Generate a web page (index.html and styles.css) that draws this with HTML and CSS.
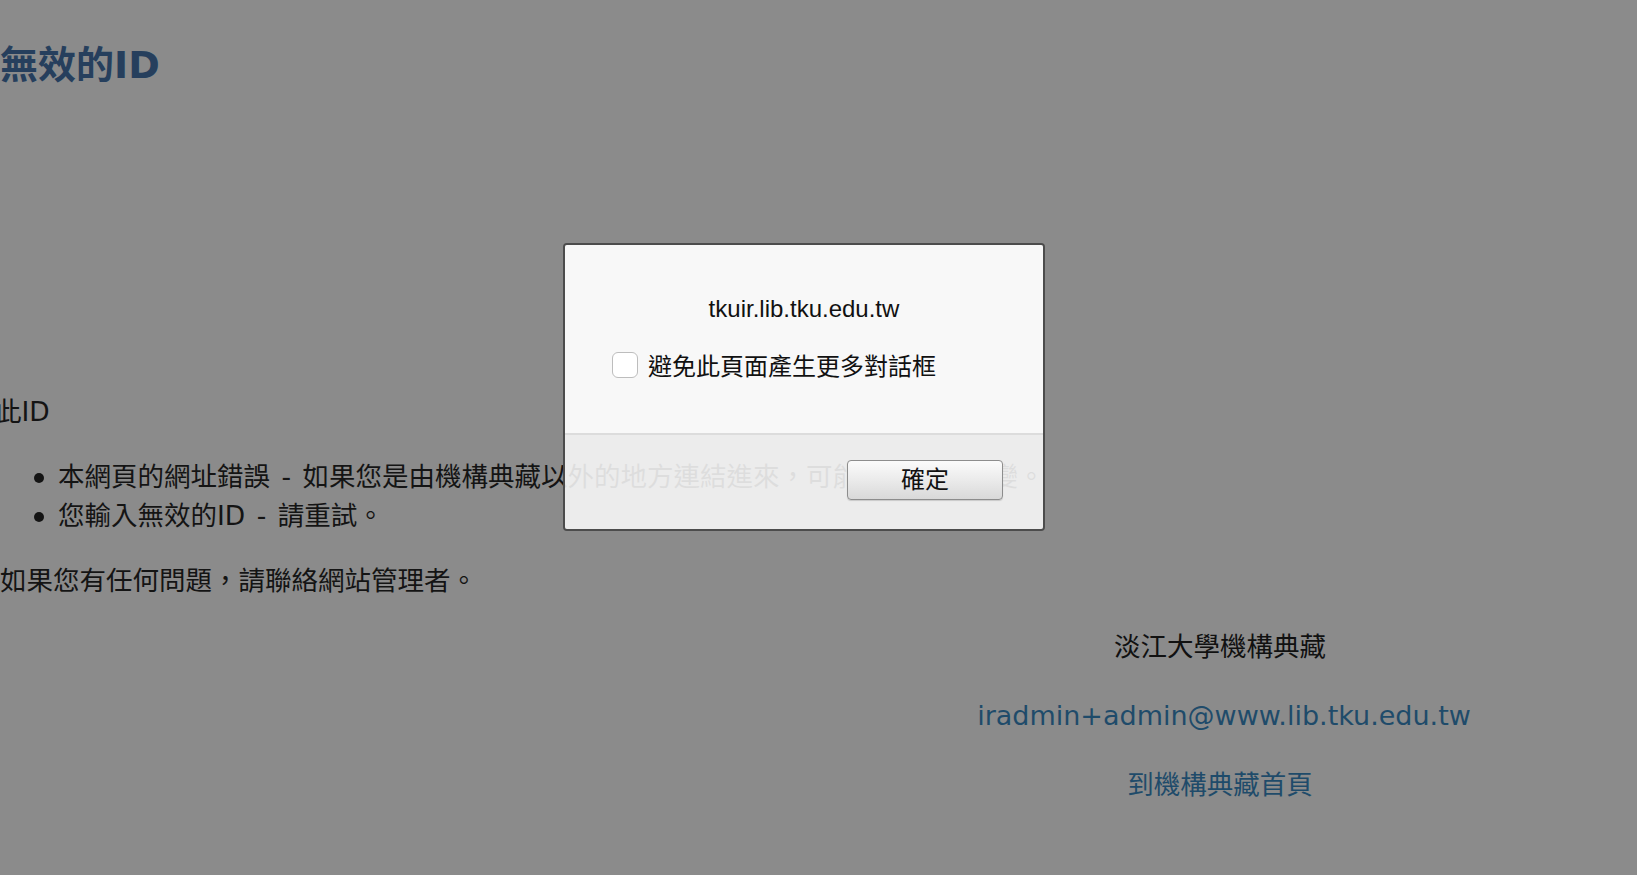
FILE: index.html
```html
<!DOCTYPE html>
<html lang="zh-Hant">
<head>
<meta charset="utf-8">
<title>無效的ID</title>
<link rel="stylesheet" href="styles.css">
</head>
<body>
<div class="page">
  <h1 class="title">無效的ID</h1>
  <p class="lead">此ID</p>
  <ul class="reasons">
    <li>本網頁的網址錯誤 - 如果您是由機構典藏以外的地方連結進來，可能是網址已改變。</li>
    <li>您輸入無效的ID - 請重試。</li>
  </ul>
  <p class="text">如果您有任何問題，請聯絡網站管理者。</p>
  <div class="footer">
    <p class="site">淡江大學機構典藏</p>
    <p><a class="link mail" href="#">iradmin+admin@www.lib.tku.edu.tw</a></p>
    <p><a class="link" href="#">到機構典藏首頁</a></p>
  </div>
</div>

<div class="dialog">
  <div class="dialog-body">
    <div class="dialog-host">tkuir.lib.tku.edu.tw</div>
    <label class="dialog-check">
      <span class="box"></span>
      <span>避免此頁面產生更多對話框</span>
    </label>
  </div>
  <div class="dialog-foot">
    <button class="ok" type="button">確定</button>
  </div>
</div>
</body>
</html>
```

FILE: styles.css
```css
html, body {
  margin: 0;
  padding: 0;
}

body {
  background: #8b8b8b;
  color: #141414;
  font-family: "DejaVu Sans", "Noto Sans CJK TC", sans-serif;
  font-size: 26.5px;
  line-height: 39px;
  width: 1637px;
  height: 875px;
  overflow: hidden;
  position: relative;
}

.title {
  margin: 44px 0 304.5px;
  font-size: 38px;
  line-height: 43px;
  font-weight: bold;
  color: #263f5d;
}

.lead {
  margin: 0 0 0 -5px;
}

.reasons {
  margin: 26px 0;
  padding-left: 58px;
  list-style: none;
  word-spacing: 3px;
  white-space: nowrap;
}

.reasons li::before {
  content: "";
  display: inline-block;
  width: 10px;
  height: 10px;
  border-radius: 50%;
  background: #141414;
  margin-left: -24px;
  margin-right: 14px;
  vertical-align: 3px;
}

.text {
  margin: 26px 0;
}

.footer {
  width: 834px;
  margin: 27px 0 0 auto;
  text-align: center;
}

.footer p {
  margin: 0 0 30px;
}

.site {
  color: #111;
}

.link {
  color: #1f4b6a;
  text-decoration: none;
}

.mail {
  font-size: 27px;
  margin-left: 8px;
}

/* alert dialog */
.dialog {
  position: absolute;
  left: 563px;
  top: 243px;
  width: 482px;
  height: 288px;
  box-sizing: border-box;
  border: 2px solid #4c4c4c;
  border-radius: 4px;
  overflow: hidden;
  display: flex;
  flex-direction: column;
  font-family: "Liberation Sans", "Noto Sans CJK TC", sans-serif;
  color: #111;
}

.dialog-body {
  background: #f8f8f8;
  height: 190px;
  box-sizing: border-box;
  padding: 46px 0 0 47px;
  border-bottom: 2px solid #dcdcdc;
}

.dialog-host {
  font-size: 24px;
  line-height: 36px;
  text-align: center;
  margin-left: -47px;
}

.dialog-check {
  display: flex;
  align-items: center;
  gap: 10px;
  margin-top: 25px;
  font-family: "Noto Sans CJK TC", sans-serif;
  font-size: 24px;
  line-height: 26px;
}

.box {
  width: 26px;
  height: 26px;
  box-sizing: border-box;
  border: 1px solid #bdbdbd;
  border-radius: 6px;
  background: #fff;
  flex: none;
}

.dialog-foot {
  flex: 1;
  background: rgba(249, 249, 249, 0.88);
  display: flex;
  justify-content: flex-end;
  align-items: flex-start;
  padding: 25px 40px 0 0;
}

.ok {
  width: 156px;
  height: 40px;
  border: 1px solid #8d8d8d;
  border-radius: 4px;
  background: linear-gradient(#fbfbfb, #e9e9e9 55%, #d9d9d9);
  box-shadow: 0 1px 1px rgba(0, 0, 0, 0.15);
  font-family: "Noto Sans CJK TC", sans-serif;
  font-size: 24px;
  color: #111;
  padding: 0 0 5px;
  line-height: 32px;
}
```
